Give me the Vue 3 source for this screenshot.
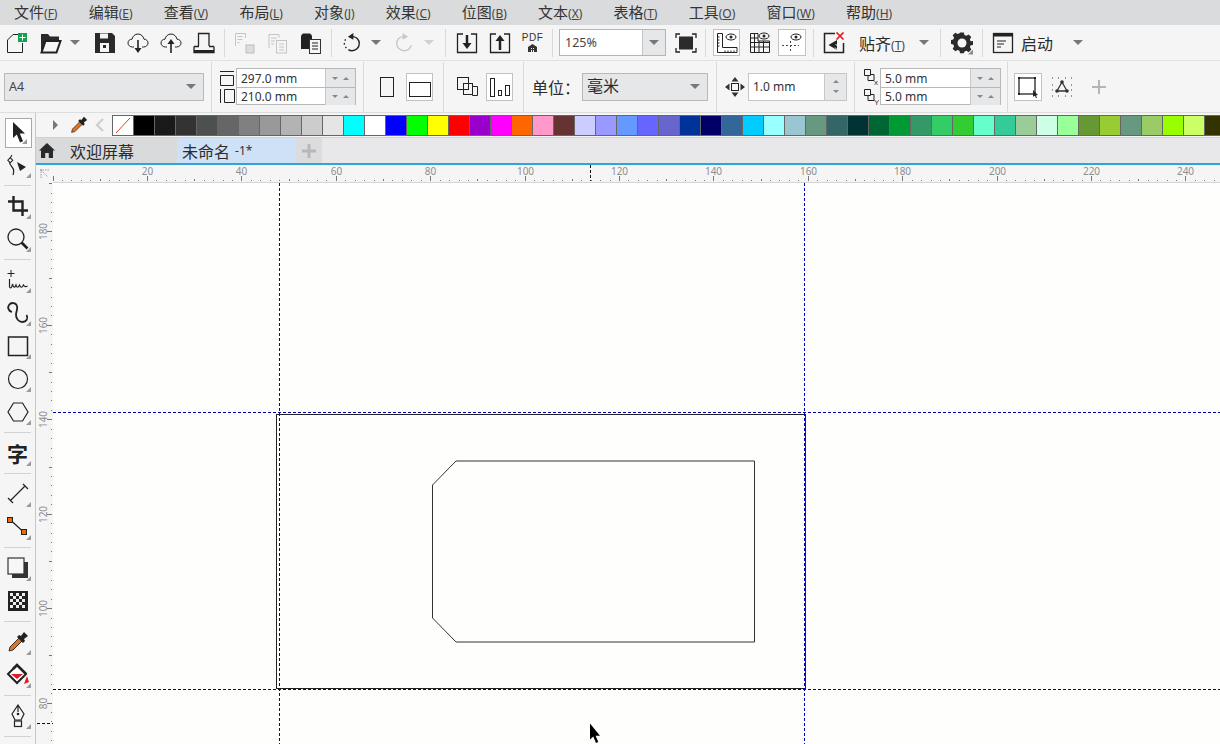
<template>
  <div class="app">
    <!-- menu -->
    <header class="menubar">
      <span v-for="m in menus" :key="m[0]" class="menu-item">{{ m[0] }}<small>(<u>{{ m[1] }}</u>)</small></span>
    </header>

    <!-- standard toolbar -->
    <div class="toolbar">
      <div class="grp g1">
        <span class="tool w34">
          <svg width="22" height="22" viewBox="0 0 22 22"><path class="ln" d="M1.500 20.500V8L7 2.500h5M16.500 11v9.500h-15"/><rect x="12" y="1" width="9" height="9" fill="#12a150"/><path d="M16.500 2.500v6M13.500 5.500h6" stroke="#fff" fill="none"/></svg>
        </span>
        <span class="tool w34">
          <svg width="22" height="22" viewBox="0 0 22 22"><path d="M1 2h7l2 2.500h9V9H6L2 20H1z" fill="#2a2a2a"/><path class="ln" d="M1.500 20.500h15L20.500 9H5.500z" stroke-width="2"/></svg>
        </span>
        <span class="caret-slot"><i class="caret"></i></span>
        <span class="tool gap6">
          <svg width="22" height="22" viewBox="0 0 22 22"><path d="M1 1h17l3 3v17H1z" fill="#2a2a2a"/><rect x="6" y="1.500" width="8" height="5" fill="#f5f5f5"/><rect x="6" y="11" width="9" height="9" fill="#f5f5f5"/><rect x="9" y="13" width="3" height="3" fill="#2a2a2a"/></svg>
        </span>
        <span class="tool">
          <svg width="22" height="22" viewBox="0 0 22 22"><path class="ln" d="M7 15H5.500C3 15 1 13.300 1 11s1.800-3.900 4-3.800C5.600 4.200 8 2 11 2s5.400 2.200 6 5.200c2.200 0 4 1.500 4 3.800s-2 4-4.500 4H15"/><path class="ln" d="M11 8v10" stroke-width="1.600"/><path d="M7.500 16h7L11 21z" fill="#222"/></svg>
        </span>
        <span class="tool">
          <svg width="22" height="22" viewBox="0 0 22 22"><path class="ln" d="M7 15H5.500C3 15 1 13.300 1 11s1.800-3.900 4-3.800C5.600 4.200 8 2 11 2s5.400 2.200 6 5.200c2.200 0 4 1.500 4 3.800s-2 4-4.500 4H15"/><path class="ln" d="M11 11v10" stroke-width="1.600"/><path d="M7.500 12L11 7l3.500 5z" fill="#222"/></svg>
        </span>
        <span class="tool">
          <svg width="22" height="22" viewBox="0 0 22 22"><path class="ln" stroke-width="1.300" d="M5.500 14V1.500h10.500V14M1 14.500h5M16 14.500h5M1 14.500V20.500H21V14.500"/><path d="M1 18h20v3H1z" fill="#222"/></svg>
        </span>
      </div>
      <div class="grp g2">
        <span class="tool">
          <svg width="22" height="22" viewBox="0 0 22 22" class="dim"><path class="ln" d="M1.500 14V1.500h10V6"/><path d="M3.500 4.500h5M3.500 7.500h5M3.500 10.500h2"/><rect x="12" y="13" width="8" height="8" fill="#ddd" stroke="#bbb"/></svg>
        </span>
        <span class="tool">
          <svg width="22" height="22" viewBox="0 0 22 22" class="dim"><path class="ln" d="M2 16V2.500h10v3M4 6h6M4 9h4M4 12h3"/><rect x="9.500" y="8.500" width="10" height="12.500" class="ln"/><path class="ln" d="M12 12h5M12 15h5M12 18h5"/></svg>
        </span>
        <span class="tool">
          <svg width="22" height="22" viewBox="0 0 22 22"><path d="M1 3.500l2-2h7l2 2V17H1z" fill="#222"/><rect x="9.500" y="7.500" width="11" height="14" fill="#f5f5f5" stroke="#333"/><path class="ln" d="M12 11h6M12 14h6M12 17h6"/></svg>
        </span>
      </div>
      <div class="grp g3">
        <span class="tool">
          <svg width="20" height="20" viewBox="0 0 22 22"><path class="ln" stroke-width="1.500" d="M12 4c4 .3 7 3.500 7 7.500 0 4.300-3.500 8-8 8-1.500 0-3-.5-4-1.200"/><path d="M4.800 16.500l-1-1.300M2.800 12.800l-.4-1.800M3 8.500l1-1.500" stroke="#222" stroke-width="1.500" fill="none"/><path d="M6.500 4l6-4v7.500z" fill="#222"/></svg>
        </span>
        <span class="caret-slot ml1"><i class="caret"></i></span>
        <span class="tool ml4">
          <svg width="20" height="20" viewBox="0 0 22 22"><path d="M10 4C6 4.300 3 7.500 3 11.500c0 4.300 3.500 8 8 8 4 0 7-2.500 8-6" fill="none" stroke="#c8c8c8" stroke-width="1.500"/><path d="M15.500 4l-6-4v7.500z" fill="#c8c8c8"/></svg>
        </span>
        <span class="caret-slot ml2"><i class="caret light"></i></span>
      </div>
      <div class="grp g4">
        <span class="tool">
          <svg width="22" height="22" viewBox="0 0 22 22"><path class="ln" stroke-width="1.300" d="M7 2H1.500v18.500h19V2H15"/><path d="M11 3v9" stroke="#222" stroke-width="2.500"/><path d="M6.500 11h9L11 17z" fill="#222"/></svg>
        </span>
        <span class="tool">
          <svg width="22" height="22" viewBox="0 0 22 22"><path class="ln" stroke-width="1.300" d="M7 2H1.500v18.500h19V2H15"/><path d="M11 18V8" stroke="#222" stroke-width="2.500"/><path d="M6.500 9h9L11 3z" fill="#222"/></svg>
        </span>
        <span class="tool pdf">
          <b>PDF</b>
          <svg width="9" height="8" viewBox="0 0 9 8"><path d="M0 3l4.500-3L9 3v5H0z" fill="#333"/><path d="M3 4h1v1H3zM5 4h1v1H5zM3 6h1v2H3zM5 6h1v2H5z" fill="#f5f5f5"/></svg>
        </span>
      </div>
      <div class="grp g5">
        <div class="zoom-combo"><span>125%</span><em><i class="caret"></i></em></div>
        <span class="tool ml3">
          <svg width="22" height="20" viewBox="0 0 22 20"><path class="ln" stroke-width="1.300" d="M1 5V1h4M17 1h4v4M1 15v4h4M17 19h4v-4"/><rect x="4" y="3.500" width="14" height="13" fill="#2b2b2b"/></svg>
        </span>
      </div>
      <div class="grp g6">
        <span class="box">
          <svg width="22" height="22" viewBox="0 0 22 22"><path class="ln" d="M1.500 1.500h5V15.500H21v5H1.500z"/><path class="ln" d="M1.500 5h2M1.500 8h2M1.500 11h2M1.500 14h2M9 20.500v-2M12 20.500v-2M15 20.500v-2M18 20.500v-2"/><ellipse cx="15" cy="5" rx="5" ry="3" class="ln"/><circle cx="15" cy="5" r="1.500" fill="#222"/></svg>
        </span>
        <span class="tool ml3">
          <svg width="22" height="22" viewBox="0 0 22 22"><path class="ln" d="M1.500 1.500H9M1.500 1.500v19h19V9M9 1.500V9h11.500M1.500 6h7.500M1.500 10.500h19M1.500 15h19M5.500 1.500v19M10 9v11.500M14.500 9v11.500"/><ellipse cx="15" cy="4" rx="5" ry="3" class="ln"/><circle cx="15" cy="4" r="1.500" fill="#222"/></svg>
        </span>
        <span class="box w28 ml2">
          <svg width="22" height="22" viewBox="0 0 22 22"><path d="M9.500 9v12M1 13.500h17" fill="none" stroke="#444" stroke-dasharray="2 2"/><ellipse cx="15" cy="5" rx="5" ry="3" class="ln"/><circle cx="15" cy="5" r="1.500" fill="#222"/></svg>
        </span>
      </div>
      <div class="grp g7">
        <span class="tool">
          <svg width="22" height="22" viewBox="0 0 22 22"><path class="ln" stroke-width="1.500" d="M12 1.500H1.500v19h19V11"/><path d="M14 8L5.500 13l8.500 5z" fill="#222"/><path d="M12.500 12l3 3M12 15.500l3 3" stroke="#f5f5f5"/><path d="M13.500 .5l7 7M20.500 .5l-7 7" stroke="#e01b24" stroke-width="1.700"/></svg>
        </span>
        <span class="plain snap">贴齐<small>(<u>T</u>)</small></span>
        <span class="caret-slot ml11"><i class="caret"></i></span>
      </div>
      <div class="grp g8">
        <span class="tool corner">
          <svg width="22" height="22" viewBox="0 0 22 22"><path d="M9 1h4l.6 2.800 2 .8 2.400-1.500 2.800 2.800-1.500 2.400.8 2L23 10v4l-2.800.6-.8 2 1.500 2.400-2.800 2.800-2.400-1.500-2 .8L13 23H9l-.6-2.800-2-.8L4 20.900 1.200 18.100l1.500-2.400-.8-2L-1 13V9l2.900-.6.8-2L1.200 4 4 1.200l2.400 1.500 2-.8z" transform="translate(0.500 -0.500) scale(0.950)" fill="#2a2a2a"/><circle cx="11" cy="11" r="4.500" fill="#f5f5f5"/></svg>
        </span>
      </div>
      <div class="grp g9">
        <span class="tool">
          <svg width="22" height="22" viewBox="0 0 22 22"><rect x="1.500" y="1.500" width="19" height="19" class="ln" stroke-width="1.300"/><path d="M1 1h20v3.500H1z" fill="#222"/><path class="ln" d="M5 9h9M5 12h7M5 15h4"/></svg>
        </span>
        <span class="plain qs">启动</span>
        <span class="caret-slot ml18"><i class="caret"></i></span>
      </div>
    </div>

    <!-- property bar -->
    <div class="propbar">
      <div class="pg p1">
        <div class="combo w200"><span class="sm">A4</span><i class="caret"></i></div>
      </div>
      <div class="pg p2">
        <div class="ico-col">
          <svg width="16" height="16" viewBox="0 0 16 16"><path class="ln" d="M1 1.500h14M1.500 5.500h13v10h-13z"/></svg>
          <svg width="16" height="16" viewBox="0 0 16 16"><path class="ln" d="M1.500 1v14M5.500 1.500h10v13h-10z"/></svg>
        </div>
        <div class="field-stack w120">
          <div class="field-row"><span class="val">297.0 mm</span><em><i class="mini down"></i><i class="mini up"></i></em></div>
          <div class="field-row"><span class="val">210.0 mm</span><em><i class="mini down"></i><i class="mini up"></i></em></div>
        </div>
      </div>
      <div class="pg p3">
        <span class="btn27 bare"><svg width="14" height="20" viewBox="0 0 14 20"><rect x=".5" y=".5" width="13" height="19" class="ln"/></svg></span>
        <span class="btn27 on low"><svg width="22" height="15" viewBox="0 0 22 15"><rect x=".5" y=".5" width="21" height="14" class="ln"/></svg></span>
      </div>
      <div class="pg p4">
        <span class="btn27 bare"><svg width="21" height="20" viewBox="0 0 21 20"><rect x=".5" y=".5" width="11" height="12" class="ln"/><rect x="6.500" y="6.500" width="9" height="11" class="ln"/><path class="ln" d="M15.500 9.500h5v9h-5z"/></svg></span>
        <span class="btn27 on"><svg width="22" height="20" viewBox="0 0 22 20"><rect x="1.500" y="1.500" width="4" height="18" class="ln"/><rect x="9.500" y="13.500" width="3" height="5" class="ln"/><rect x="16.500" y="8.500" width="4" height="10" class="ln"/></svg></span>
      </div>
      <div class="pg p5">
        <span class="plain unit">单位：</span>
        <div class="combo w126"><span class="md">毫米</span><i class="caret"></i></div>
      </div>
      <div class="pg p6">
        <svg width="20" height="20" viewBox="0 0 20 20"><rect x="6.500" y="6.500" width="7" height="7" class="ln"/><path d="M10 0l3.500 4.500h-7zM10 20l3.500-4.500h-7zM0 10l4.500-3.500v7zM20 10l-4.500-3.500v7z" fill="#333"/></svg>
        <div class="nudge">
          <span class="val">1.0 mm</span>
          <em><i class="mini up"></i><i class="mini down"></i></em>
        </div>
      </div>
      <div class="pg p7">
        <div class="ico-col">
          <svg width="16" height="18" viewBox="0 0 16 18"><path class="ln" d="M1.500 1.500h6v6h-6zM5 7.500v5h6v-6H7.500"/><text x="11" y="17" class="tiny">x</text></svg>
          <svg width="16" height="18" viewBox="0 0 16 18"><path class="ln" d="M1.500 1.500h6v6h-6zM5 7.500v5h6v-6H7.500"/><text x="11" y="17" class="tiny">Y</text></svg>
        </div>
        <div class="field-stack w121">
          <div class="field-row"><span class="val">5.0 mm</span><em><i class="mini down"></i><i class="mini up"></i></em></div>
          <div class="field-row"><span class="val">5.0 mm</span><em><i class="mini down"></i><i class="mini up"></i></em></div>
        </div>
      </div>
      <div class="pg p8">
        <span class="btn27 on w28"><svg width="22" height="22" viewBox="0 0 22 22"><rect x="2" y="2" width="16" height="16" class="ln" stroke-width="1.300"/><path d="M1 1h2v2H1zM17 1h2v2h-2zM1 17h2v2H1z" fill="#222"/><path d="M16 14l5 5-2 .5 1 2.500-1 .3-1-2.500-2 1z" fill="#222"/></svg></span>
        <span class="slot29"><svg width="22" height="22" viewBox="0 0 22 22"><path d="M1 2h1M7 2h1M14 2h1M20 2h1M1 9h1M20 9h1M1 14h1M20 14h1M1 20h1M7 20h1M14 20h1M20 20h1" stroke="#333" fill="none"/><path d="M11 6l-5 9h10z" fill="none" stroke="#333" stroke-width="1.300"/><circle cx="11" cy="6" r="1.800" fill="#333"/><circle cx="6" cy="15" r="1.800" fill="#333"/><circle cx="16" cy="15" r="1.800" fill="#333"/></svg></span>
        <span class="plus">
          <svg width="16" height="16" viewBox="0 0 16 16"><path d="M8 1v14M1 8h14" stroke="#b5b5b5" stroke-width="2"/></svg>
        </span>
      </div>
    </div>

    <div class="work">
      <!-- toolbox -->
      <aside class="toolbox">
        <span class="tb active fly">
          <svg width="14" height="22" viewBox="0 0 14 22"><path d="M1 0v16l3.800-3.500 3.200 8 3-1.300-3.200-7.700H13z" fill="#222"/></svg>
        </span>
        <span class="tb fly">
          <svg width="24" height="24" viewBox="0 0 24 24"><path class="ln" stroke-width="1.200" d="M6 2C2 7 3 11 6 14c2 2 2 5 1 8"/><rect x="2.500" y="5.500" width="3.500" height="3.500" fill="#f5f5f5" stroke="#222" transform="rotate(45 4.250 7.250)"/><path d="M11 9l9 5-6 4z" fill="#222"/></svg>
        </span>
        <i class="tb-sep"></i>
        <span class="tb fly">
          <svg width="22" height="22" viewBox="0 0 22 22"><path d="M1 6.500h14.500V21M6.500 1v14.500H21" fill="none" stroke="#222" stroke-width="2.400"/></svg>
        </span>
        <span class="tb fly">
          <svg width="24" height="24" viewBox="0 0 24 24"><circle cx="10" cy="10" r="8" class="ln" stroke-width="1.300"/><path d="M15.500 15.500l6 6" stroke="#222" stroke-width="2.600"/></svg>
        </span>
        <i class="tb-sep"></i>
        <span class="tb fly">
          <svg width="22" height="22" viewBox="0 0 22 22"><path class="ln" d="M4 1v7M.5 4.500h7"/><path class="ln" stroke-width="1.200" d="M2.500 10v8c1.500 2 2.500 0 3-3 1 4 2.500 4 3.500 1 1 3 2 3 3.500 0 1 3 2.500 3 4 0 1 2 2.500 2 4 1"/></svg>
        </span>
        <span class="tb fly">
          <svg width="24" height="24" viewBox="0 0 24 24"><path d="M6 11C2 10 1.500 6 3 4c2-3 7-2.500 8 1 1 3-1 5-1 9 0 4 3 7 6.500 7 4 0 6-3.500 4-7" fill="none" stroke="#222" stroke-width="1.800"/></svg>
        </span>
        <span class="tb fly">
          <svg width="22" height="22" viewBox="0 0 22 22"><rect x="1.500" y="2" width="19" height="18.500" class="ln" stroke-width="1.500"/></svg>
        </span>
        <span class="tb fly">
          <svg width="22" height="22" viewBox="0 0 22 22"><circle cx="11" cy="11" r="9.500" class="ln" stroke-width="1.200"/></svg>
        </span>
        <span class="tb fly">
          <svg width="22" height="22" viewBox="0 0 22 22"><path class="ln" stroke-width="1.200" d="M6.500 2h9L21 11l-5.500 9h-9L1 11z"/></svg>
        </span>
        <i class="tb-sep"></i>
        <span class="tb fly zi">字</span>
        <i class="tb-sep"></i>
        <span class="tb fly">
          <svg width="22" height="22" viewBox="0 0 22 22"><path class="ln" stroke-width="1.200" d="M3 18L18 3M1 15l5 5M16 1l5 5"/></svg>
        </span>
        <span class="tb fly">
          <svg width="24" height="22" viewBox="0 0 24 22"><path d="M5 4.500l12 11" stroke="#222" stroke-width="1.200"/><rect x="1.500" y="1.500" width="5" height="5" fill="#ee6a10" stroke="#222"/><rect x="15.500" y="13.500" width="5" height="5" fill="#ee6a10" stroke="#222"/></svg>
        </span>
        <i class="tb-sep"></i>
        <span class="tb fly">
          <svg width="22" height="22" viewBox="0 0 22 22"><path d="M5 17v4h16V5h-4v12z" fill="#333"/><rect x="1" y="1" width="16" height="16" fill="#f7f7f7" stroke="#333" stroke-width="1.200"/></svg>
        </span>
        <span class="tb">
          <svg width="20" height="20" viewBox="0 0 20 20"><rect width="20" height="20" fill="#222"/><path d="M2 2h3v3H2zM8 2h3v3H8zM14 2h3v3h-3zM5 5h3v3H5zM11 5h3v3h-3zM2 8h3v3H2zM8 8h3v3H8zM14 8h3v3h-3zM5 11h3v3H5zM11 11h3v3h-3zM2 14h3v3H2zM8 14h3v3H8zM14 14h3v3h-3z" fill="#eee"/></svg>
        </span>
        <i class="tb-sep"></i>
        <span class="tb fly">
          <svg width="22" height="22" viewBox="0 0 22 22"><path d="M2 20l1-4L12 7l3 3-9 9z" fill="#e2741f" stroke="#333"/><path d="M10 6l2-2 2 1 3-4 4 4-4 3 1 2-2 2z" fill="#222"/></svg>
        </span>
        <span class="tb fly">
          <svg width="24" height="24" viewBox="0 0 24 24"><path d="M11 2l9 9-9 9-9-9z" fill="#fff" stroke="#222" stroke-width="2"/><path d="M5 11h12l-6 5z" fill="#e01b24"/><path d="M7 6l4-4 9 9" fill="none" stroke="#222" stroke-width="2.500"/><path d="M21 13l2 6-5 2z" fill="#e01b24"/></svg>
        </span>
        <i class="tb-sep"></i>
        <span class="tb fly">
          <svg width="18" height="24" viewBox="0 0 18 24"><path class="ln" stroke-width="1.200" d="M9 1l6 9-3 6H6l-3-6zM9 1v7"/><circle cx="9" cy="10" r="1.300" fill="#222"/><rect x="5.500" y="17" width="7" height="5.500" class="ln" stroke-width="1.200"/></svg>
        </span>
        <i class="tb-sep"></i>
      </aside>

      <section class="doc">
        <!-- palette -->
        <div class="palette">
          <i class="grip"></i>
          <i class="pal-play"></i>
          <svg class="pal-drop" width="18" height="18" viewBox="0 0 22 22"><path d="M2 20l1-4L12 7l3 3-9 9z" fill="#e2741f" stroke="#333"/><path d="M10 6l2-2 2 1 3-4 4 4-4 3 1 2-2 2z" fill="#222"/></svg>
          <svg class="pal-back" width="10" height="14" viewBox="0 0 10 14"><path d="M8 1L2 7l6 6" fill="none" stroke="#cfcfcf" stroke-width="2.400"/></svg>
          <div class="swatches">
            <span class="swatch none"><svg width="20" height="19" viewBox="0 0 20 19"><path d="M3 17L17 2" stroke="#d9412f"/></svg></span>
            <span v-for="(c, i) in colors" :key="i" class="swatch" :style="{ background: c }"></span>
          </div>
        </div>

        <!-- tabs -->
        <div class="tabs">
          <div class="tab home">
            <svg width="16" height="15" viewBox="0 0 16 15"><path d="M8 0l8 7.500h-2V15H9.800v-5H6.200v5H2V7.500H0z" fill="#2a2a2a"/></svg>
            <span>欢迎屏幕</span>
          </div>
          <div class="tab current"><span>未命名</span><small>-1*</small></div>
          <div class="tab add"><svg width="16" height="16" viewBox="0 0 16 16"><path d="M8 1v14M1 8h14" stroke="#b8b8b8" stroke-width="3"/></svg></div>
        </div>

        <!-- horizontal ruler -->
        <div class="ruler-top">
          <div class="ruler-corner">
            <svg width="12" height="12" viewBox="0 0 12 12"><path d="M2 1v9M1 2h9M2 2l7 7" stroke="#999" fill="none" stroke-dasharray="1.500 1"/></svg>
          </div>
          <svg class="ruler-svg" width="1167" height="18" viewBox="53 165 1167 18">
            <template v-for="t in hTicks" :key="t.v">
              <line :x1="t.x" :x2="t.x" :y1="t.top" y2="181" stroke="#777" />
              <text v-if="t.label" :x="t.x" y="175" class="rl">{{ t.v }}</text>
            </template>
            <line x1="590.500" x2="590.500" y1="165" y2="181" stroke="#111" stroke-dasharray="3 2" />
            <line x1="53" x2="1220" y1="182.500" y2="182.500" stroke="#d4d4d4" />
          </svg>
        </div>

        <div class="view">
          <svg class="ruler-left" width="17" height="561" viewBox="36 183 17 561">
            <template v-for="t in vTicks" :key="t.v">
              <line :y1="t.y" :y2="t.y" :x1="t.left" x2="52" stroke="#777" />
              <text v-if="t.label" x="47" :y="t.y" class="rl" :transform="`rotate(-90 47 ${t.y})`">{{ t.v }}</text>
            </template>
            <line x1="37" x2="53" y1="723.500" y2="723.500" stroke="#111" stroke-dasharray="3 2" />
          </svg>
          <!-- drawing area, in screen coordinates -->
          <svg class="canvas" width="1167" height="561" viewBox="53 183 1167 561">
            <rect x="276.500" y="414.500" width="529" height="274" fill="none" stroke="#222" />
            <path d="M456 461H754.500V642H456L432.500 618V485z" fill="none" stroke="#333" />
            <line x1="53" x2="1220" y1="412.500" y2="412.500" stroke="#0000a8" stroke-dasharray="3 2" />
            <line x1="53" x2="1220" y1="689.500" y2="689.500" stroke="#0a0a50" stroke-dasharray="3 2" />
            <line x1="279.500" x2="279.500" y1="183" y2="744" stroke="#14144a" stroke-dasharray="3 2" />
            <line x1="804.500" x2="804.500" y1="183" y2="744" stroke="#0000c8" stroke-dasharray="3 2" />
            <path d="M590 723.500v16l3.300-3 2.700 6.500 2.300-1-2.700-6.300H600z" fill="#000" />
          </svg>
        </div>
      </section>
    </div>
  </div>
</template>

<script setup>
const menus = [
  ['文件', 'F'], ['编辑', 'E'], ['查看', 'V'], ['布局', 'L'], ['对象', 'J'], ['效果', 'C'],
  ['位图', 'B'], ['文本', 'X'], ['表格', 'T'], ['工具', 'O'], ['窗口', 'W'], ['帮助', 'H'],
]

const colors = [
  '#000000', '#1a1a1a', '#333333', '#4c514d', '#666666', '#808080', '#999999', '#b3b3b3', '#cccccc', '#e5e5e5',
  '#00ffff', '#ffffff', '#0000ff', '#00ff00', '#ffff00', '#ff0000', '#9900cc', '#ff00ff', '#ff6600', '#ff99cc',
  '#663333', '#ccccff', '#9999ff', '#6699ff', '#6666ff', '#6666cc', '#003399', '#000066', '#336699', '#00ccff',
  '#99ffff', '#99c6d0', '#669980', '#336666', '#003333', '#006633', '#009933', '#339966', '#33cc66', '#33cc33',
  '#66ffcc', '#33cc99', '#99cc99', '#ccffe6', '#99ff99', '#669933', '#99cc33', '#669980', '#99cc66', '#99ff00',
  '#ccff66', '#333300',
]

const hTicks = []
for (let v = -2; v <= 248; v += 2) {
  const major = v % 20 === 0
  const mid = v % 10 === 0
  hTicks.push({
    v,
    x: Math.round(52.6 + 4.72 * v) + 0.5,
    top: major ? 176 : mid ? 179 : 180,
    label: major && v > 0,
  })
}

const vTicks = []
for (let v = 190; v >= 70; v -= 2) {
  const major = v % 20 === 0
  const mid = v % 10 === 0
  const y = Math.round(230.5 + (180 - v) * 4.72) + 0.5
  if (y < 183) continue
  vTicks.push({ v, y, left: major ? 47 : mid ? 49 : 51, label: major })
}
</script>

<style>
html, body { margin: 0; background: #f5f5f5; }
</style>

<style scoped>
.app {
  width: 1220px;
  height: 744px;
  overflow: hidden;
  display: flex;
  flex-direction: column;
  background: #f5f5f5;
  color: #2b2b2b;
  font-family: "Noto Sans", "Noto Sans CJK SC", sans-serif;
}
em { font-style: normal; }
svg { display: block; flex: none; }
.ln { fill: none; stroke: #222; }
.dim .ln { stroke: #c4c4c4; }
.dim path:not(.ln) { stroke: #c4c4c4; fill: none; }

.menubar {
  height: 25px;
  flex: none;
  display: flex;
  align-items: center;
  gap: 31.200px;
  padding-left: 14px;
  background: #dadbdc;
  font-size: 15px;
  box-sizing: border-box;
}
.menu-item { white-space: nowrap; color: #333; line-height: 25px; }
small { font-size: 12px; color: #444; }

.toolbar {
  height: 35px;
  flex: none;
  display: flex;
  align-items: center;
}
.grp {
  height: 28px;
  display: flex;
  align-items: center;
  border-right: 1px solid #d9d9d9;
  flex: none;
}
.g1 { width: 224px; }
.g2 { width: 107px; padding-left: 3px; box-sizing: border-box; }
.g3 { width: 114px; padding-left: 3px; box-sizing: border-box; }
.g4 { width: 107px; padding-left: 4px; box-sizing: border-box; }
.g5 { width: 153px; padding-left: 6px; box-sizing: border-box; }
.g6 { width: 108px; padding-left: 7px; box-sizing: border-box; }
.g7 { width: 127px; padding-left: 3px; box-sizing: border-box; }
.g8 { width: 42px; padding-left: 4px; box-sizing: border-box; }
.g9 { padding-left: 3px; border-right: 0; }

.tool {
  width: 33px;
  height: 28px;
  display: flex;
  flex-direction: column;
  align-items: center;
  justify-content: center;
  flex: none;
}
.w34 { width: 34px; }
.gap6 { margin-left: 6px; }
.ml1 { margin-left: 1px; }
.ml2 { margin-left: 2px; }
.ml3 { margin-left: 3px; }
.ml4 { margin-left: 4px; }
.ml11 { margin-left: 11px; }
.ml18 { margin-left: 18px; }
.caret-slot { width: 14px; display: flex; justify-content: center; flex: none; }
.caret {
  display: block;
  width: 0;
  height: 0;
  border-left: 5px solid transparent;
  border-right: 5px solid transparent;
  border-top: 5px solid #777;
}
.caret.light { border-top-color: #d0d0d0; }
.pdf b { font-size: 10px; line-height: 10px; font-weight: 500; letter-spacing: 0.500px; color: #333; font-family: "Liberation Sans", sans-serif; }
.pdf { gap: 1px; }

.zoom-combo {
  width: 107px;
  height: 27px;
  box-sizing: border-box;
  display: flex;
  background: #fff;
  border: 1px solid #b5b5b5;
  font-size: 12.500px;
  line-height: 25px;
  flex: none;
}
.zoom-combo span { flex: 1; padding-left: 5px; color: #444; }
.zoom-combo em {
  width: 22px;
  background: #e6e7e9;
  border-left: 1px solid #c4c4c4;
  display: flex;
  align-items: center;
  justify-content: center;
}
.box {
  width: 27px;
  height: 27px;
  box-sizing: border-box;
  background: #fff;
  border: 1px solid #c2c2c2;
  display: flex;
  align-items: center;
  justify-content: center;
  flex: none;
}
.w28 { width: 28px; }
.plain { white-space: nowrap; font-size: 16px; color: #2b2b2b; flex: none; }
.snap { margin-left: 9px; width: 47px; }
.qs { margin-left: 2px; width: 32px; }
.corner { position: relative; }
.corner::after {
  content: "";
  position: absolute;
  right: 5px;
  bottom: 2px;
  width: 5px;
  height: 5px;
  background: #8a8a8a;
  clip-path: polygon(100% 0, 100% 100%, 0 100%);
}

.propbar {
  height: 53px;
  flex: none;
  display: flex;
  align-items: center;
  box-sizing: border-box;
  border-top: 1px solid #e1e1e1;
  border-bottom: 1px solid #dddddd;
}
.pg {
  height: 50px;
  display: flex;
  align-items: center;
  flex: none;
  border-right: 1px solid #d9d9d9;
  box-sizing: border-box;
}
.p1 { width: 212px; padding-left: 4px; }
.p2 { width: 152px; padding-left: 7px; }
.p3 { width: 80px; padding-left: 9px; gap: 6px; }
.p4 { width: 80px; padding-left: 10px; gap: 5px; }
.p5 { width: 193px; padding-left: 8px; }
.p6 { width: 138px; padding-left: 8px; gap: 3px; }
.p7 { width: 153px; padding-left: 8px; }
.p8 { border-right: 0; padding-left: 6px; }

.combo {
  height: 28px;
  box-sizing: border-box;
  display: flex;
  align-items: center;
  justify-content: space-between;
  padding: 0 7px 0 4px;
  background: #e6e7e9;
  border: 1px solid #b8b8b8;
  flex: none;
}
.w200 { width: 200px; }
.w126 { width: 126px; }
.sm { font-size: 12.500px; color: #444; }
.md { font-size: 16px; line-height: 24px; color: #2b2b2b; padding-bottom: 1px; }
.unit { width: 50px; }
.ico-col { width: 17px; display: flex; flex-direction: column; gap: 2px; flex: none; }
.field-stack {
  border: 1px solid #b8b8b8;
  box-sizing: border-box;
  background: #fff;
  height: 37px;
  flex: none;
}
.w120 { width: 120px; }
.w121 { width: 121px; }
.field-row { height: 18px; display: flex; align-items: center; }
.field-row + .field-row { border-top: 1px solid #b8b8b8; height: 17px; }
.val { flex: 1; padding-left: 4px; font-size: 12px; line-height: 17px; color: #333; }
.field-row .val { line-height: 16px; padding-top: 1px; }
.field-row em {
  width: 30px;
  height: 100%;
  background: #e6e7e9;
  border-left: 1px solid #c8c8c8;
  display: flex;
  align-items: center;
  justify-content: space-around;
  padding: 0 3px;
  box-sizing: border-box;
}
.mini { display: block; width: 0; height: 0; border-left: 3.500px solid transparent; border-right: 3.500px solid transparent; }
.mini.down { border-top: 3.500px solid #888; }
.mini.up { border-bottom: 3.500px solid #888; }
.btn27 {
  width: 27px;
  height: 28px;
  box-sizing: border-box;
  display: flex;
  align-items: center;
  justify-content: center;
  flex: none;
}
.btn27.on { background: #fff; border: 1px solid #c2c2c2; }
.btn27.w28 { width: 28px; }
.btn27.low { align-items: flex-end; padding-bottom: 3px; }
.nudge {
  width: 99px;
  height: 28px;
  box-sizing: border-box;
  display: flex;
  align-items: center;
  background: #fff;
  border: 1px solid #c6c6c6;
  flex: none;
}
.nudge em {
  width: 21px;
  height: 100%;
  background: #e6e7e9;
  border-left: 1px solid #c8c8c8;
  display: flex;
  flex-direction: column;
  align-items: center;
  justify-content: space-evenly;
}
.tiny { font-size: 8px; fill: #333; font-family: "Liberation Sans", sans-serif; }
.slot29 { width: 29px; margin-left: 5px; display: flex; justify-content: center; flex: none; }
.plus { width: 26px; margin-left: 10px; display: flex; justify-content: center; flex: none; }

.work { flex: 1; min-height: 0; display: flex; }
.toolbox {
  width: 36px;
  flex: none;
  box-sizing: border-box;
  padding-top: 3px;
  border-right: 1px solid #c8c8c8;
  display: flex;
  flex-direction: column;
  align-items: stretch;
}
.tb {
  height: 33px;
  flex: none;
  display: flex;
  align-items: center;
  justify-content: center;
  position: relative;
}
.tb.active {
  margin: 2px 3px 0 5px;
  height: 28px;
  background: #fff;
  border: 1px solid #a8a8a8;
}
.tb-sep {
  display: block;
  height: 1px;
  margin: 4px 4px 3px;
  background: #d2d2d2;
  flex: none;
}
.fly::after {
  content: "";
  position: absolute;
  right: 4px;
  bottom: 3px;
  width: 5px;
  height: 5px;
  background: #9a9a9a;
  clip-path: polygon(100% 0, 100% 100%, 0 100%);
}
.zi { font-size: 21px; font-weight: 700; color: #222; }

.doc { flex: 1; min-width: 0; display: flex; flex-direction: column; }
.palette {
  height: 25px;
  flex: none;
  box-sizing: border-box;
  display: flex;
  align-items: center;
  border-bottom: 1px solid #d2d2d2;
}
.grip {
  width: 6px;
  height: 20px;
  margin-left: 2px;
  background-image: radial-gradient(circle, #b5b5b5 0.700px, transparent 0.900px);
  background-size: 2px 2px;
}
.pal-play {
  margin-left: 15px;
  width: 0;
  height: 0;
  border-top: 5px solid transparent;
  border-bottom: 5px solid transparent;
  border-left: 5px solid #777;
}
.pal-drop { margin-left: 12px; }
.pal-back { margin-left: 7px; }
.swatches { display: flex; margin-left: 7px; border-right: 1px solid #666; }
.swatch {
  width: 21px;
  height: 21px;
  box-sizing: border-box;
  border: 1px solid #666;
  border-right: 0;
  flex: none;
}
.swatch.none { background: #fff; }

.tabs {
  height: 27px;
  flex: none;
  box-sizing: border-box;
  display: flex;
  background: #e8e8ea;
  border-bottom: 2px solid #2ea4d8;
}
.tab { display: flex; align-items: center; font-size: 16px; color: #2b2b2b; flex: none; }
.home { width: 141px; background: #d9dadb; padding-left: 3px; box-sizing: border-box; }
.home svg { margin-right: 15px; }
.current { width: 119px; background: #cfe1f7; padding-left: 5px; box-sizing: border-box; gap: 5px; }
.current small { font-size: 12px; color: #333; }
.add { width: 26px; background: #dcdcde; justify-content: center; }

.ruler-top { height: 18px; flex: none; display: flex; }
.ruler-corner { width: 17px; display: flex; align-items: center; justify-content: center; }
.rl { font-size: 10px; fill: #8e8e8e; text-anchor: middle; font-family: "Noto Sans", sans-serif; }

.view { flex: 1; min-height: 0; display: flex; }
.ruler-left { background: #f5f5f5; }
.canvas { background: #fefefc; }
</style>
